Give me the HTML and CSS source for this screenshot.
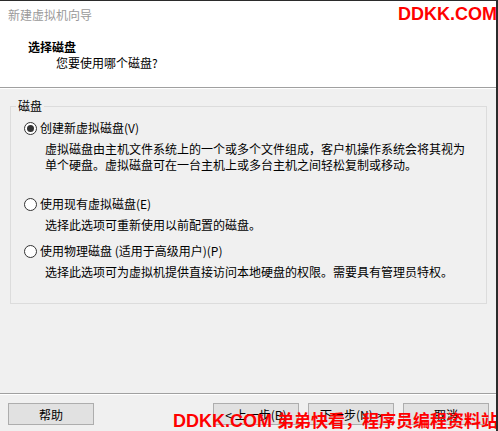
FILE: index.html
```html
<!DOCTYPE html>
<html lang="zh-CN">
<head>
    <meta charset="UTF-8">
    <meta name="viewport" content="width=device-width, initial-scale=1.0">
    <title>新建虚拟机向导</title>
    <link rel="stylesheet" href="styles.css">
</head>
<body>
    <div class="window">
        <div class="header">
            <div class="title">新建虚拟机向导</div>
            <div class="heading">选择磁盘</div>
            <div class="sub">您要使用哪个磁盘?</div>
        </div>

        <div class="content">
            <fieldset class="group">
                <legend>磁盘</legend>

                <div class="opt opt-first">
                    <div class="radio-row">
                        <span class="radio checked"></span>
                        <span>创建新虚拟磁盘(V)</span>
                    </div>
                    <div class="desc">虚拟磁盘由主机文件系统上的一个或多个文件组成，客户机操作系统会将其视为<br>单个硬盘。虚拟磁盘可在一台主机上或多台主机之间轻松复制或移动。</div>
                </div>

                <div class="opt opt-wide">
                    <div class="radio-row">
                        <span class="radio"></span>
                        <span>使用现有虚拟磁盘(E)</span>
                    </div>
                    <div class="desc">选择此选项可重新使用以前配置的磁盘。</div>
                </div>

                <div class="opt opt-near">
                    <div class="radio-row">
                        <span class="radio"></span>
                        <span>使用物理磁盘 (适用于高级用户)(P)</span>
                    </div>
                    <div class="desc">选择此选项可为虚拟机提供直接访问本地硬盘的权限。需要具有管理员特权。</div>
                </div>
            </fieldset>
        </div>

        <div class="footer">
            <button class="btn">帮助</button>
            <div class="btn-group">
                <button class="btn">&lt; 上一步(B)</button>
                <button class="btn">下一步(N) &gt;</button>
                <button class="btn">取消</button>
            </div>
        </div>

        <div class="mark mark-top">DDKK.COM</div>
        <div class="mark mark-bottom">DDKK.COM <span class="mark-cn">弟弟快看，程序员编程资料站</span></div>
    </div>
</body>
</html>
```

FILE: styles.css
```css
body {
    margin: 0;
    padding: 0;
    background-color: #f0f0f0;
    font-family: "Noto Sans CJK SC", "Liberation Sans", sans-serif;
    font-size: 12px;
    color: #000;
}

.window {
    position: relative;
    display: flex;
    flex-direction: column;
    width: 498px;
    height: 431px;
    box-sizing: border-box;
    border-top: 1px solid #2b2b2b;
    border-right: 2px solid #2b2b2b;
    background-color: #f0f0f0;
    overflow: hidden;
}

/* Header */
.header {
    height: 86px;
    background-color: #fff;
    border-bottom: 1px solid #a0a0a0;
    box-shadow: 0 1px 0 #fff;
}

.title {
    height: 28px;
    line-height: 28px;
    padding-left: 8px;
    color: #9a9a9a;
}

.heading {
    margin-top: 10px;
    padding-left: 28px;
    line-height: 16px;
    font-weight: bold;
}

.sub {
    padding-left: 56px;
    line-height: 16px;
}

/* Group box */
.content {
    flex: 1;
    padding: 10px 0 0 10px;
}

.group {
    width: 477px;
    height: 206px;
    box-sizing: border-box;
    margin: 0;
    padding: 0;
    border: 1px solid #dcdcdc;
}

.group legend {
    margin-left: 5px;
    padding: 0 2px;
    line-height: 16px;
}

.opt-first {
    margin-top: 6px;
}

.opt-wide {
    margin-top: 23px;
}

.opt-near {
    margin-top: 10px;
}

.radio-row {
    display: flex;
    align-items: center;
    gap: 3px;
    height: 16px;
    padding-left: 13px;
    line-height: 16px;
}

.radio {
    position: relative;
    width: 13px;
    height: 13px;
    box-sizing: border-box;
    border: 1px solid #333;
    border-radius: 50%;
    background-color: #fff;
}

.radio.checked::after {
    content: "";
    position: absolute;
    left: 2px;
    top: 2px;
    width: 7px;
    height: 7px;
    border-radius: 50%;
    background-color: #333;
}

.desc {
    margin-top: 5px;
    padding-left: 34px;
    line-height: 16px;
}

/* Footer */
.footer {
    display: flex;
    justify-content: space-between;
    height: 38px;
    box-sizing: border-box;
    padding: 9px 7px 0 8px;
    border-top: 1px solid #a0a0a0;
    box-shadow: inset 0 1px 0 #fff;
}

.btn-group {
    display: flex;
    gap: 9px;
}

.btn {
    width: 86px;
    height: 22px;
    padding: 0;
    font-family: inherit;
    font-size: 12px;
    color: #000;
    background-color: #e1e1e1;
    border: 1px solid #adadad;
}

/* Watermarks */
.mark {
    position: absolute;
    color: #f00;
    font-family: "Liberation Sans", "Noto Sans CJK SC", sans-serif;
    font-weight: bold;
    font-size: 18px;
    line-height: 20px;
    white-space: nowrap;
}

.mark-top {
    top: 3px;
    left: 398px;
}

.mark-bottom {
    top: 410px;
    left: 173px;
}

.mark-cn {
    font-size: 17px;
}
```
